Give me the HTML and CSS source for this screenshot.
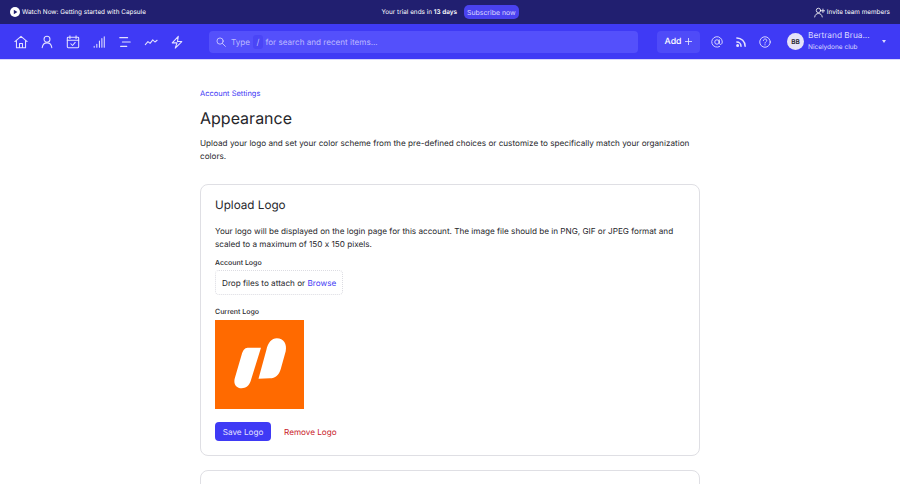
FILE: index.html
```html
<!DOCTYPE html>
<html lang="en">
<head>
<meta charset="utf-8">
<title>Appearance</title>
<link rel="stylesheet" href="styles.css">
</head>
<body>
<div class="topbar">
  <a class="watch">
    <svg class="play" viewBox="0 0 10 10" width="10" height="10"><circle cx="5" cy="5" r="5" fill="#fff"/><path d="M3.8 2.7v4.6L7.4 5z" fill="#211f70"/></svg>
    Watch Now: Getting started with Capsule
  </a>
  <div class="trial">
    <span>Your trial ends in <b>13 days</b></span>
    <a class="subscribe">Subscribe now</a>
  </div>
  <a class="invite">
    <svg viewBox="0 0 16 16" width="11" height="11" fill="none" stroke="#fff" stroke-width="1.2" stroke-linecap="round"><circle cx="6.5" cy="5" r="3.2"/><path d="M1 14.5c.5-3.5 2.6-5 5.5-5s5 1.500 5.500 5M13 3v5M10.500 5.500h5"/></svg>
    Invite team members
  </a>
</div>
<nav class="navbar">
  <div class="nav-icons">
    <svg viewBox="0 0 16 16" width="14" height="14"><path d="M1 7.500 8 1.500l7 6M2.800 6.500V14.500h10.400V6.500M6.300 14.500V9.800h3.400v4.700"/></svg>
    <svg viewBox="0 0 16 16" width="14" height="14"><circle cx="8" cy="4.800" r="3.400"/><path d="M2.500 14.500c.5-3.500 2.500-5.500 5.500-5.500s5 2 5.500 5.500"/></svg>
    <svg viewBox="0 0 16 16" width="14" height="14"><rect x="1.500" y="2.500" width="13" height="12" rx="1"/><path d="M1.500 6h13M4.500 1v3M11.500 1v3M5.500 10l2 2 3-3.500"/></svg>
    <svg viewBox="0 0 16 16" width="14" height="14"><path d="M2.500 14v-1M5.500 14v-3.500M8.500 14V7M11.300 14V4M14 14V2"/></svg>
    <svg viewBox="0 0 16 16" width="14" height="14"><path d="M2 3h9M5 8h9M3 13h7"/></svg>
    <svg viewBox="0 0 16 16" width="14" height="14"><path d="M1.500 11 4.500 7.500 7 9.500 10 5.500l2.500 2.500 2.500-2"/></svg>
    <svg viewBox="0 0 16 16" width="14" height="14"><path d="M9.500 1.500 2.500 9h5.500L6 15 13.500 7.500H8.500z"/></svg>
  </div>
  <div class="search">
    <svg viewBox="0 0 16 16" width="10" height="10"><circle cx="6.500" cy="6.500" r="5"/><path d="m10.500 10.500 4.500 4.500"/></svg>
    <span>Type</span><kbd>/</kbd><span>for search and recent items...</span>
  </div>
  <a class="add">Add
    <svg viewBox="0 0 10 10" width="7" height="7"><path d="M5 .5v9M.5 5h9"/></svg>
  </a>
  <div class="nav-actions">
    <svg viewBox="0 0 16 16" width="12" height="12"><circle cx="8" cy="8" r="3"/><path d="M11 5v4.500c0 2.500 4 2.500 4-1.500A7 7 0 1 0 11.500 14"/></svg>
    <svg class="rss" viewBox="0 0 16 16" width="12" height="12"><path d="M2.500 8c3 0 5.500 2.500 5.500 5.500M2.500 2.500c6 0 11 5 11 11"/><circle cx="3.500" cy="12.500" r="1"/></svg>
    <svg viewBox="0 0 16 16" width="12" height="12"><circle cx="8" cy="8" r="7"/><path d="M5.800 6c.3-2.800 4.500-2.800 4.500 0 0 1.800-2.300 1.700-2.300 3.500M8 11.500v.5"/></svg>
  </div>
  <div class="user">
    <span class="avatar">BB</span>
    <div class="user-text">
      <span class="user-name">Bertrand Brua...</span>
      <span class="user-org">Nicelydone club</span>
    </div>
    <span class="caret"></span>
  </div>
</nav>
<main class="content">
  <a class="crumb">Account Settings</a>
  <h1>Appearance</h1>
  <p class="intro">Upload your logo and set your color scheme from the pre-defined choices or customize to specifically match your organization colors.</p>
  <section class="card">
    <h2>Upload Logo</h2>
    <p>Your logo will be displayed on the login page for this account. The image file should be in PNG, GIF or JPEG format and scaled to a maximum of 150 x 150 pixels.</p>
    <label>Account Logo</label>
    <div class="drop"><span>Drop files to attach or <a>Browse</a></span></div>
    <label class="current">Current Logo</label>
    <svg class="logo" viewBox="0 0 90 90" width="89" height="89">
      <rect width="90" height="90" fill="#ff6a00"/>
      <path d="M33 28h13.500L36 62c-1.500 4.500-5 7-9 7-6 0-8.500-5-7-10l7-24c1-4 3-7 6-7z" fill="#fff"/>
      <path d="M44 59.500 52 30c1.500-7 5.500-11.500 10.500-11.500 7 0 10.500 6 9 13l-5 18c-2 6.500-5.500 9.500-11 9.500z" fill="#fff"/>
    </svg>
    <div class="actions">
      <a class="save">Save Logo</a>
      <a class="remove">Remove Logo</a>
    </div>
  </section>
  <section class="card next"></section>
</main>
</body>
</html>
```
FILE: styles.css
```css
* { box-sizing: border-box; }
html, body { margin: 0; height: 484px; overflow: hidden; }
body { font-family: Inter, "Liberation Sans", sans-serif; color: #26262b; background: #fff; text-rendering: geometricPrecision; font-feature-settings: "calt" 0; }
.topbar { height: 24px; background: #211f70; color: #fff; font-size: 6.400px; display: grid; grid-template-columns: 1fr auto 1fr; align-items: center; padding: 0 10px; }
.watch { display: flex; align-items: center; gap: 2px; }
.trial { display: flex; align-items: center; gap: 7px; }
.trial b { font-weight: 600; }
.subscribe { background: #4a42f0; color: #ddd9ff; height: 14px; padding: 0 3px; border-radius: 5px; display: flex; align-items: center; font-size: 6.900px; }
.invite { justify-self: end; display: flex; align-items: center; gap: 2px; }
.navbar { height: 36px; background: #3f3af5; border-bottom: 1px solid #d8d6fb; display: flex; align-items: center; padding: 0 12px 0 14px; color: #fff; }
.navbar > * { flex: none; }
.navbar svg { fill: none; stroke: #e4e2ff; stroke-width: 1.200; stroke-linecap: round; stroke-linejoin: round; }
.navbar svg.rss { stroke-width: 2; }
.nav-icons { display: flex; gap: 12px; width: 195px; }
.search { width: 429px; height: 22px; background: #5450fb; border-radius: 4px; display: flex; align-items: center; padding: 0 7px; font-size: 8.125px; color: #bdbaff; }
.search svg { margin-right: 5px; }
.search kbd { font: inherit; width: 10px; height: 14px; margin: 0 2.500px 0 3px; background: #4a45f6; border-radius: 3px; text-align: center; line-height: 14px; }
.add { margin-left: 19px; width: 43px; height: 22px; background: #4f4bf8; border-radius: 4px; display: flex; align-items: center; justify-content: center; gap: 4px; font-size: 8.750px; font-weight: 500; }
.nav-actions { display: flex; gap: 12px; margin-left: 11px; }
.user { display: flex; align-items: center; margin-left: 16px; }
.avatar { width: 17px; height: 17px; border-radius: 50%; background: #e6e3f8; color: #26262b; font-size: 6.500px; font-weight: 600; display: flex; align-items: center; justify-content: center; }
.user-text { display: flex; flex-direction: column; margin-left: 4px; width: 74px; }
.user-name { font-size: 8.300px; line-height: 11px; color: #dcdaff; }
.user-org { font-size: 6.500px; line-height: 10px; color: #dcdaff; }
.caret { width: 0; height: 0; border: 2.500px solid transparent; border-top: 3px solid #dcdaff; border-bottom: 0; }
.content { width: 500px; margin: 0 auto; padding-top: 28px; }
.crumb { display: block; color: #3f3af5; font-size: 7.500px; line-height: 12px; }
h1 { margin: 5px 0 0; font-size: 16px; font-weight: 400; line-height: 26px; }
.intro { margin: 6px 0 0; font-size: 8.170px; line-height: 12.500px; }
.card { margin-top: 22px; height: 272px; padding: 12px 14px; border: 1px solid #dfdfe4; border-radius: 8px; }
.card h2 { margin: 0; font-size: 11.700px; font-weight: 400; line-height: 17px; }
.card p { margin: 11px 0 0; font-size: 8.170px; line-height: 12.500px; }
.card label { display: block; margin-top: 8px; font-size: 7px; font-weight: 500; line-height: 10px; }
.drop { width: 128px; height: 25px; margin-top: 2px; border: 1px dotted #dcdce2; border-radius: 4px; font-size: 8.170px; display: flex; align-items: center; padding-left: 6px; }
.drop a { color: #3f3af5; }
.card label.current { margin-top: 12px; }
.logo { display: block; margin-top: 3px; }
.actions { display: flex; align-items: center; gap: 13px; margin-top: 13px; }
.actions a { font-size: 8.170px; height: 19px; display: flex; align-items: center; }
.save { background: #3f3af5; color: #e4e2ff; width: 56px; justify-content: center; border-radius: 4px; }
.remove { color: #c8202a; }
.next { margin-top: 14px; height: 60px; }
```
